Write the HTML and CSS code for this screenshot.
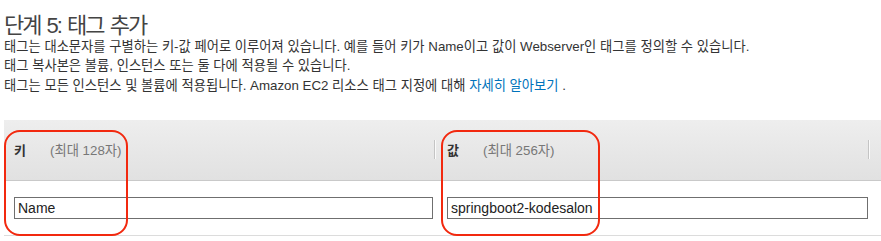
FILE: index.html
```html
<!DOCTYPE html>
<html lang="ko">
  <head>
    <meta charset="UTF-8" />
    <title>태그 추가</title>
    <link rel="stylesheet" href="styles.css">
  </head>
  <body>
    <div class="page">
      <h2>단계 5: 태그 추가</h2>
      <p>태그는 대소문자를 구별하는 키-값 페어로 이루어져 있습니다. 예를 들어 키가 Name이고 값이 Webserver인 태그를 정의할 수 있습니다.</p>
      <p>태그 복사본은 볼륨, 인스턴스 또는 둘 다에 적용될 수 있습니다.</p>
      <p>태그는 모든 인스턴스 및 볼륨에 적용됩니다. Amazon EC2 리소스 태그 지정에 대해 <a href="#">자세히 알아보기</a> .</p>

      <div class="tags">
        <div class="tags-head">
          <div class="col col-key">
            <span class="name">키</span>
            <span class="hint">(최대 128자)</span>
            <span class="sep"></span>
          </div>
          <div class="col col-value">
            <span class="name">값</span>
            <span class="hint">(최대 256자)</span>
            <span class="sep"></span>
          </div>
        </div>
        <div class="tags-row">
          <div class="col col-key">
            <input type="text" value="Name" />
          </div>
          <div class="col col-value">
            <input type="text" value="springboot2-kodesalon" />
          </div>
        </div>

        <!-- annotation marks -->
        <div class="mark mark-key"></div>
        <div class="mark mark-value"></div>
      </div>
    </div>
  </body>
</html>
```

FILE: styles.css
```css
/* General */
body {
  margin: 0;
  font-family: "Liberation Sans", "Noto Sans CJK KR", sans-serif;
  color: #333;
  background: #fff;
}

.page {
  padding-left: 4px;
}

h2 {
  font-size: 22px;
  font-weight: normal;
  letter-spacing: -2px;
  word-spacing: 2px;
  color: #444;
  margin: 0;
  padding-top: 14px;
  line-height: 23px;
}

p {
  font-size: 13.3px;
  line-height: 19.3px;
  margin: 0;
}

a {
  color: #0073bb;
  text-decoration: none;
}

/* Tag table */
.tags {
  position: relative;
  margin-top: 25px;
}

.tags-head,
.tags-row {
  display: flex;
}

.tags-head {
  height: 60px;
  align-items: center;
  background: linear-gradient(#eeeeee, #e1e1e1);
  border-bottom: 1px solid #c9c9c9;
}

.col {
  display: flex;
  align-items: center;
  box-sizing: border-box;
}

.col-key {
  width: 432px;
  padding-left: 10px;
}

.col-value {
  flex: 1;
  padding-left: 11px;
  padding-right: 11px;
}

.name {
  width: 36px;
  font-size: 13px;
  font-weight: bold;
  color: #333;
}

.hint {
  font-size: 13.3px;
  color: #777;
}

.sep {
  margin-left: auto;
  width: 1px;
  height: 19px;
  background: #c4c4c4;
  border-right: 1px solid #fafafa;
}

.tags-row {
  height: 54px;
  border-bottom: 1px solid #dcdcdc;
}

.tags-row .col-value {
  padding-left: 11px;
  padding-right: 13px;
}

input {
  box-sizing: border-box;
  height: 22px;
  width: 100%;
  margin: 0;
  padding: 0 3px;
  border: 1px solid #6f6f6f;
  font-family: "Liberation Sans", "Noto Sans CJK KR", sans-serif;
  font-size: 14px;
  color: #222;
}

.tags-row .col-key input {
  width: 419px;
}

/* Red annotation outlines */
.mark {
  position: absolute;
  top: 10px;
  height: 106px;
  border: 2px solid #f2290f;
  border-radius: 16px;
  box-sizing: border-box;
}

.mark-key {
  left: 0;
  width: 124px;
}

.mark-value {
  left: 437px;
  width: 159px;
}
```
